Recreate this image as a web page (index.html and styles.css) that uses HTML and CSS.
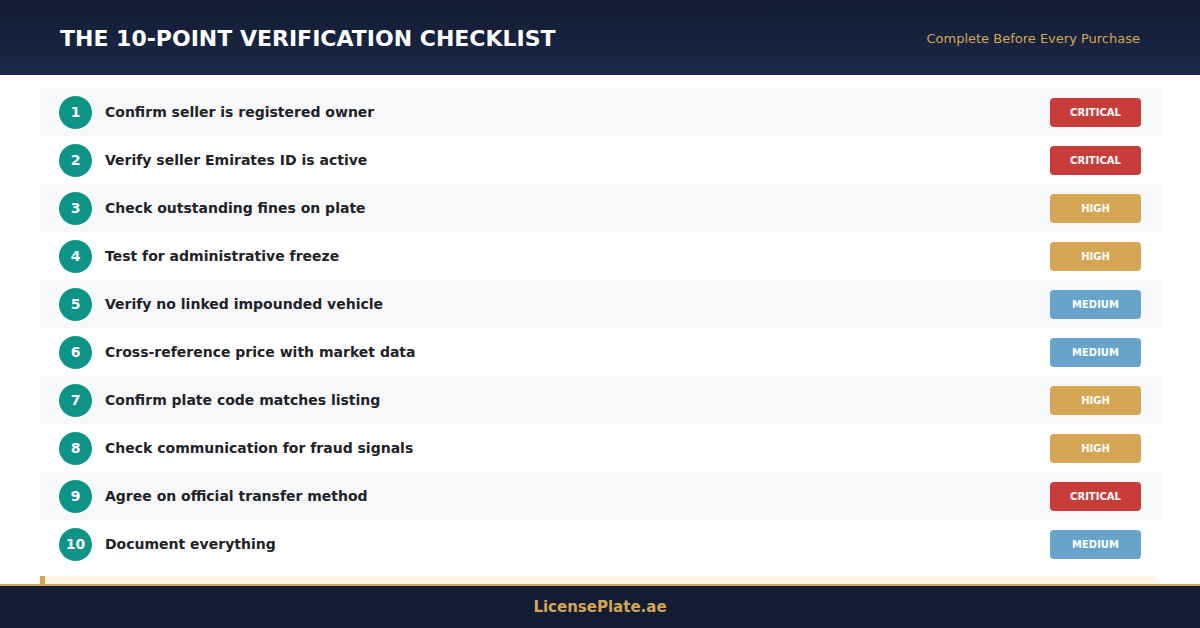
FILE: index.html
```html
<!DOCTYPE html>
<html lang="en">
<head>
<meta charset="utf-8">
<title>The 10-Point Verification Checklist</title>
<link rel="stylesheet" href="styles.css">
</head>
<body>
<div class="page">
  <header class="top">
    <h1 class="title">THE 10-POINT VERIFICATION CHECKLIST</h1>
    <div class="subtitle">Complete Before Every Purchase</div>
  </header>
  <main class="content">
    <ol class="list">
      <li class="row alt"><span class="num">1</span><span class="label">Confirm seller is registered owner</span><span class="badge critical">CRITICAL</span></li>
      <li class="row"><span class="num">2</span><span class="label">Verify seller Emirates ID is active</span><span class="badge critical">CRITICAL</span></li>
      <li class="row alt"><span class="num">3</span><span class="label">Check outstanding fines on plate</span><span class="badge high">HIGH</span></li>
      <li class="row"><span class="num">4</span><span class="label">Test for administrative freeze</span><span class="badge high">HIGH</span></li>
      <li class="row alt"><span class="num">5</span><span class="label">Verify no linked impounded vehicle</span><span class="badge medium">MEDIUM</span></li>
      <li class="row"><span class="num">6</span><span class="label">Cross-reference price with market data</span><span class="badge medium">MEDIUM</span></li>
      <li class="row alt"><span class="num">7</span><span class="label">Confirm plate code matches listing</span><span class="badge high">HIGH</span></li>
      <li class="row"><span class="num">8</span><span class="label">Check communication for fraud signals</span><span class="badge high">HIGH</span></li>
      <li class="row alt"><span class="num">9</span><span class="label">Agree on official transfer method</span><span class="badge critical">CRITICAL</span></li>
      <li class="row"><span class="num">10</span><span class="label">Document everything</span><span class="badge medium">MEDIUM</span></li>
    </ol>
    <div class="note"></div>
  </main>
  <footer class="bottom">
    <span class="brand">LicensePlate.ae</span>
  </footer>
</div>
</body>
</html>
```

FILE: styles.css
```css
* { box-sizing: border-box; }
html, body { margin: 0; padding: 0; }
body {
  width: 1200px;
  height: 628px;
  overflow: hidden;
  background: #ffffff;
  font-family: "DejaVu Sans", "Liberation Sans", sans-serif;
}
.page {
  display: flex;
  flex-direction: column;
  height: 628px;
}
.top {
  height: 75px;
  flex: 0 0 75px;
  display: flex;
  align-items: center;
  justify-content: space-between;
  padding: 2px 60px 0;
  background: linear-gradient(180deg, #131b32 0%, #1b2949 100%);
}
.title {
  margin: 0;
  color: #ffffff;
  font-size: 22px;
  font-weight: bold;
}
.subtitle {
  color: #d3a752;
  font-size: 13px;
}
.content {
  flex: 1 1 auto;
  overflow: hidden;
  padding: 13px 39px 0 40px;
}
.list {
  list-style: none;
  margin: 0;
  padding: 0;
}
.row {
  height: 48px;
  display: flex;
  align-items: center;
  padding: 0 20px 0 19px;
  background: #ffffff;
}
.row.alt { background: #f7f8fa; }
.num {
  width: 33px;
  height: 33px;
  flex: 0 0 33px;
  border-radius: 50%;
  background: #0e9486;
  color: #ffffff;
  font-size: 14px;
  font-weight: bold;
  display: flex;
  align-items: center;
  justify-content: center;
}
.label {
  flex: 1 1 auto;
  margin-left: 13px;
  color: #1f2227;
  font-size: 14px;
  font-weight: bold;
}
.badge {
  width: 91px;
  height: 29px;
  border-radius: 4px;
  color: #ffffff;
  font-size: 10px;
  font-weight: bold;
  display: flex;
  align-items: center;
  justify-content: center;
}
.badge.critical { background: #c83c3c; }
.badge.high { background: #d4a655; }
.badge.medium { background: #67a3cb; }
.note {
  margin-top: 8px;
  height: 40px;
  background: #fff7e6;
  border-left: 5px solid #d4a653;
  border-radius: 0 10px 10px 0;
}
.bottom {
  height: 44px;
  flex: 0 0 44px;
  border-top: 2px solid #d4a653;
  background: #131c33;
  display: flex;
  align-items: center;
  justify-content: center;
}
.brand {
  color: #d4a653;
  font-size: 15px;
  font-weight: bold;
}
```
